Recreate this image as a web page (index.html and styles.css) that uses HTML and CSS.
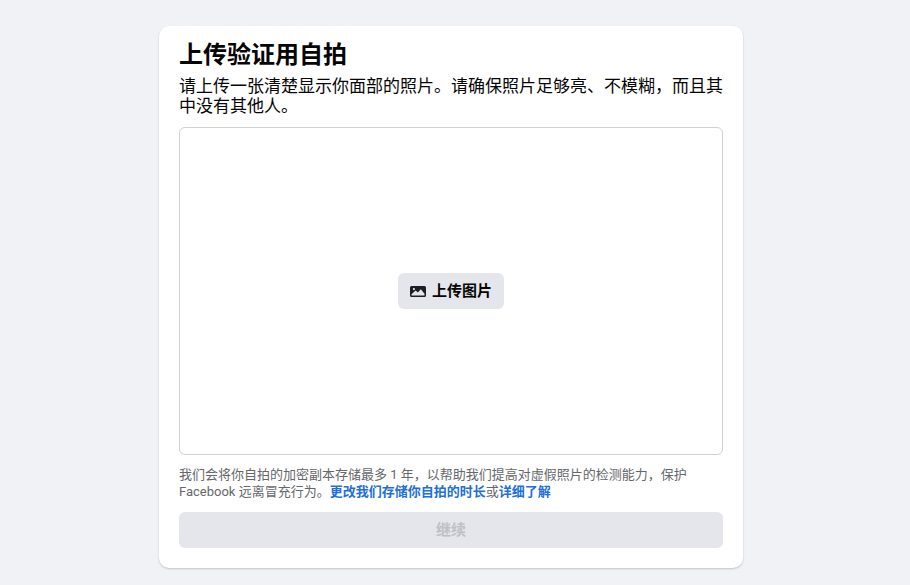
FILE: index.html
```html
<!DOCTYPE html>
<html lang="zh-CN">
<head>
  <meta charset="UTF-8" />
  <meta name="viewport" content="width=device-width, initial-scale=1.0"/>
  <title>上传验证用自拍</title>
  <link rel="stylesheet" href="styles.css">
</head>
<body>
  <div class="card">
    <h1>上传验证用自拍</h1>
    <p class="intro">请上传一张清楚显示你面部的照片。请确保照片足够亮、不模糊，而且其中没有其他人。</p>

    <div class="dropzone">
      <button class="upload-btn">
        <svg class="upload-icon" viewBox="0 0 16 11" width="16" height="11">
          <path fill-rule="evenodd" d="M1.500 0h13A1.500 1.500 0 0 1 16 1.500v8a1.500 1.500 0 0 1-1.500 1.500h-13A1.500 1.500 0 0 1 0 9.500v-8A1.500 1.500 0 0 1 1.500 0zM1.500 9.500h13V7.800L10.800 3.200 7.900 6.400 5.600 4.600 1.500 8.200z M3.900 2a1.100 1.100 0 1 0 0 2.200 1.100 1.100 0 0 0 0-2.200z"/>
        </svg>
        <span class="upload-label">上传图片</span>
      </button>
    </div>

    <p class="note">我们会将你自拍的加密副本存储最多 1 年，以帮助我们提高对虚假照片的检测能力，保护 Facebook 远离冒充行为。<a href="#">更改我们存储你自拍的时长</a>或<a href="#">详细了解</a></p>

    <button class="continue-btn" disabled>继续</button>
  </div>
</body>
</html>
```

FILE: styles.css
```css
* {
  box-sizing: border-box;
}

body {
  margin: 0;
  padding-right: 8px;
  height: 585px;
  overflow: hidden;
  background: #f0f2f5;
  font-family: Roboto, "Noto Sans CJK SC", sans-serif;
  color: #050505;
}

.card {
  width: 584px;
  height: 542px;
  margin: 26px auto 0;
  padding: 13px 20px 20px;
  background: #fff;
  border-radius: 10px;
  box-shadow: 0 1px 2px rgba(0, 0, 0, 0.2);
  display: flex;
  flex-direction: column;
}

h1 {
  margin: 0;
  font-size: 24px;
  line-height: 32px;
  font-weight: 700;
}

.intro {
  margin: 5px 0 0;
  font-size: 17px;
  line-height: 20px;
}

.dropzone {
  height: 328px;
  margin-top: 11px;
  border: 1px solid #ced0d4;
  border-radius: 6px;
  display: flex;
  align-items: center;
  justify-content: center;
}

.upload-btn {
  height: 36px;
  padding: 0 12px;
  border: 0;
  border-radius: 6px;
  background: #e4e6eb;
  color: #050505;
  font: inherit;
  font-size: 15px;
  font-weight: 700;
  display: flex;
  align-items: center;
  gap: 6px;
}

.upload-icon {
  fill: #1c1e21;
}

.upload-label {
  margin-bottom: 3px;
}

.note {
  margin: 11px 0 0;
  font-size: 13px;
  line-height: 17px;
  color: #65676b;
}

.note a {
  color: #216fdb;
  font-weight: 700;
  text-decoration: none;
}

.continue-btn {
  height: 36px;
  margin-top: 12px;
  padding: 0 0 4px;
  border: 0;
  border-radius: 6px;
  background: #e4e6eb;
  color: #bcc0c4;
  font: inherit;
  font-size: 15px;
  font-weight: 700;
}
```
